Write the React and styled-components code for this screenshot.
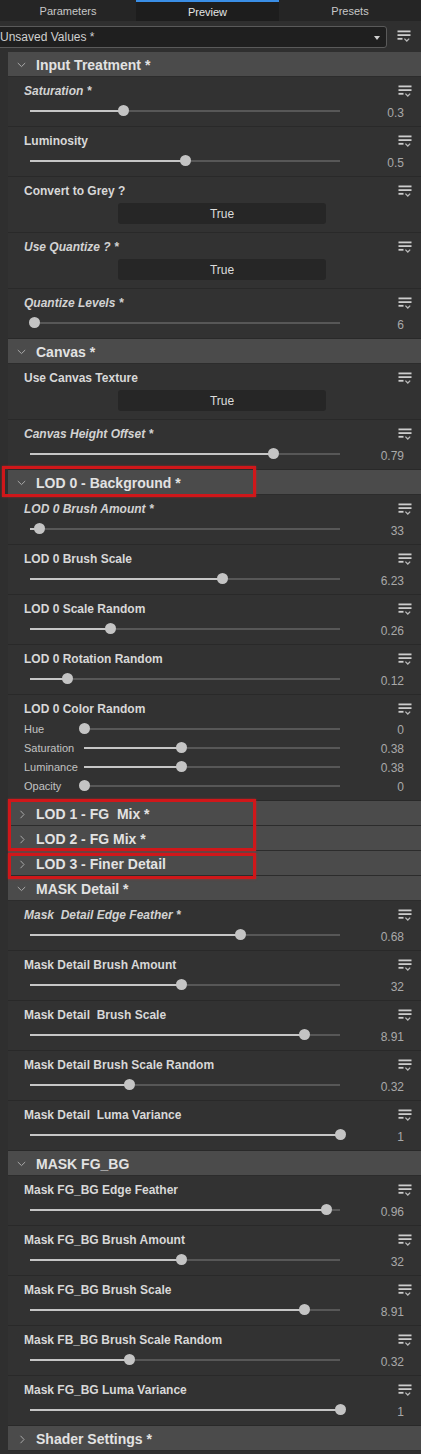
import React from 'react';
import styled, { createGlobalStyle } from 'styled-components';

const Global = createGlobalStyle`
  html, body { margin: 0; padding: 0; background: #2f2f2f; }
  body { font-family: "Liberation Sans", Arial, sans-serif; color: #d4d4d4; }
  * { box-sizing: border-box; }
`;

const Panel = styled.div`
  width: 421px;
  height: 1454px;
  overflow: hidden;
  background: #2f2f2f;
`;

const TabBar = styled.div`
  display: grid;
  grid-template-columns: 136px 143px 142px;
  height: 21px;
  background: #242424;
`;

const Tab = styled.div`
  display: flex;
  align-items: center;
  justify-content: center;
  font-size: 11px;
  color: ${p => (p.$active ? '#e6e6e6' : '#c8c8c8')};
  background: ${p => (p.$active ? '#1d1d1d' : '#252525')};
  border-top: 2px solid ${p => (p.$active ? '#3a8ee6' : 'transparent')};
  padding-top: ${p => (p.$active ? '1px' : '0')};
  padding-bottom: ${p => (p.$active ? '0' : '2px')};
`;

const PresetRow = styled.div`
  display: flex;
  align-items: center;
  height: 31px;
  padding-right: 10px;
`;

const Dropdown = styled.div`
  flex: none;
  width: 391px;
  margin-left: -4px;
  height: 22px;
  border: 1px solid #5a5a5a;
  border-radius: 3px;
  background: #1f1f1f;
  display: flex;
  align-items: center;
  justify-content: space-between;
  padding: 0 6px 0 3px;
  font-size: 12px;
  color: #cfcfcf;
`;

const Caret = styled.span`
  width: 0;
  height: 0;
  border-left: 3px solid transparent;
  border-right: 3px solid transparent;
  border-top: 4px solid #cfcfcf;
  margin-top: 2px;
`;

const MenuWrap = styled.div`
  margin-left: auto;
  display: flex;
  align-items: center;
`;

const MenuIcon = () => (
  <svg width="14" height="13" viewBox="0 0 14 13">
    <rect x="0.5" y="0.5" width="13" height="1.8" fill="#cdcdcd" />
    <rect x="0.5" y="4.2" width="13" height="1.8" fill="#cdcdcd" />
    <rect x="0.5" y="7.9" width="5" height="1.8" fill="#cdcdcd" />
    <polyline points="7.4,8.6 9.8,11 12.2,8.6" fill="none" stroke="#b8b8b8" strokeWidth="1.3" />
  </svg>
);

const Body = styled.div`
  margin-left: 8px;
`;

const Header = styled.div`
  position: relative;
  height: 25px;
  background: #4b4b4b;
  border-bottom: 1px solid #2c2c2c;
  display: flex;
  align-items: center;
  padding: 2px 0 0 9px;
  font-size: 14px;
  font-weight: bold;
  color: #e2e2e2;
  white-space: pre;
`;

const ChevronBox = styled.span`
  width: 19px;
  display: flex;
  align-items: center;
`;

const Chevron = ({ open }) =>
  open ? (
    <svg width="9" height="6" viewBox="0 0 9 6">
      <polyline points="0.8,1 4.5,4.6 8.2,1" fill="none" stroke="#a9a9a9" strokeWidth="1" />
    </svg>
  ) : (
    <svg width="9" height="9" viewBox="0 0 9 9" style={{ marginLeft: 2 }}>
      <polyline points="1.5,0.8 5,4.5 1.5,8.2" fill="none" stroke="#a9a9a9" strokeWidth="1" />
    </svg>
  );

const Row = styled.div`
  background: #323232;
  border-bottom: 1px solid #292929;
  padding: 6px 9px ${p => p.$pb}px 16px;
`;

const LabelLine = styled.div`
  display: flex;
  justify-content: space-between;
  align-items: center;
  height: 16px;
`;

const Label = styled.span`
  font-size: 12px;
  font-weight: bold;
  font-style: ${p => (p.$italic ? 'italic' : 'normal')};
  color: ${p => (p.$italic ? '#d2d2d2' : '#d8d8d8')};
  white-space: pre;
`;

const SliderLine = styled.div`
  display: flex;
  align-items: center;
  height: ${p => p.$h}px;
  margin-top: ${p => p.$mt}px;
`;

const SubLabel = styled.span`
  width: 60px;
  flex: none;
  font-size: 11px;
  color: #c2c2c2;
`;

const Track = styled.div`
  position: relative;
  flex: none;
  width: ${p => p.$w}px;
  margin-left: ${p => p.$ml}px;
  height: 2px;
  background: #575757;
`;

const Fill = styled.div`
  position: absolute;
  left: 0;
  top: 0;
  height: 2px;
  background: #c6c6c6;
`;

const Thumb = styled.div`
  position: absolute;
  top: -5px;
  width: 11px;
  height: 11px;
  margin-left: -5.5px;
  border-radius: 50%;
  background: #c4c4c4;
`;

const Value = styled.span`
  flex: 1;
  text-align: right;
  padding-right: 8px;
  padding-top: 3px;
  font-size: 12px;
  color: #a9a9a9;
`;

const ToggleBtn = styled.div`
  margin: 4px 0 0 94px;
  width: 208px;
  height: 21px;
  border-radius: 3px;
  background: #262626;
  display: flex;
  align-items: center;
  justify-content: center;
  font-size: 12px;
  color: #dcdcdc;
`;

const Marked = styled.div`
  position: relative;
`;

const Mark = styled.div`
  position: absolute;
  pointer-events: none;
  border: 3px solid #d0171a;
  box-shadow: 0 0 2px rgba(230, 30, 30, 0.6);
  top: ${p => p.$top}px;
  left: ${p => p.$left}px;
  width: ${p => p.$w}px;
  height: ${p => p.$h}px;
  z-index: 2;
`;

const Slider = ({ f, width, ml }) => (
  <Track $w={width} $ml={ml}>
    <Fill style={{ width: `${f * width}px` }} />
    <Thumb style={{ left: `${f * width}px` }} />
  </Track>
);

const Item = ({ it }) => {
  if (it.type === 'toggle') {
    return (
      <Row $pb={8}>
        <LabelLine>
          <Label $italic={it.italic}>{it.label}</Label>
          <MenuIcon />
        </LabelLine>
        <ToggleBtn>{it.value}</ToggleBtn>
      </Row>
    );
  }
  if (it.type === 'color') {
    return (
      <Row $pb={5}>
        <LabelLine>
          <Label>{it.label}</Label>
          <MenuIcon />
        </LabelLine>
        <div style={{ height: 2 }} />
        {it.subs.map(s => (
          <SliderLine key={s.label} $h={19} $mt={0}>
            <SubLabel>{s.label}</SubLabel>
            <Slider f={s.f} width={256} ml={0} />
            <Value>{s.value}</Value>
          </SliderLine>
        ))}
      </Row>
    );
  }
  return (
    <Row $pb={5}>
      <LabelLine>
        <Label $italic={it.italic}>{it.label}</Label>
        <MenuIcon />
      </LabelLine>
      <SliderLine $h={20} $mt={2}>
        <Slider f={it.f} width={310} ml={6} />
        <Value>{it.value}</Value>
      </SliderLine>
    </Row>
  );
};

const Section = ({ s }) => (
  <>
    <Header>
      <ChevronBox>
        <Chevron open={s.open} />
      </ChevronBox>
      {s.title}
      {s.mark && <Mark $top={-4} $left={-6} $w={254} $h={31} />}
    </Header>
    {s.open && s.items.map((it, i) => <Item key={i} it={it} />)}
  </>
);

const sl = (label, f, value, italic) => ({ type: 'slider', label, f, value, italic });

const sections = {
  input: {
    title: 'Input Treatment *',
    open: true,
    items: [
      sl('Saturation *', 0.3, '0.3', true),
      sl('Luminosity', 0.5, '0.5'),
      { type: 'toggle', label: 'Convert to Grey ?', value: 'True' },
      { type: 'toggle', label: 'Use Quantize ? *', value: 'True', italic: true },
      sl('Quantize Levels *', 0.016, '6', true),
    ],
  },
  canvas: {
    title: 'Canvas *',
    open: true,
    items: [
      { type: 'toggle', label: 'Use Canvas Texture', value: 'True' },
      sl('Canvas Height Offset *', 0.787, '0.79', true),
    ],
  },
  lod0: {
    title: 'LOD 0 - Background *',
    open: true,
    mark: true,
    items: [
      sl('LOD 0 Brush Amount *', 0.032, '33', true),
      sl('LOD 0 Brush Scale', 0.62, '6.23'),
      sl('LOD 0 Scale Random', 0.26, '0.26'),
      sl('LOD 0 Rotation Random', 0.12, '0.12'),
      {
        type: 'color',
        label: 'LOD 0 Color Random',
        subs: [
          { label: 'Hue', f: 0, value: '0' },
          { label: 'Saturation', f: 0.38, value: '0.38' },
          { label: 'Luminance', f: 0.38, value: '0.38' },
          { label: 'Opacity', f: 0, value: '0' },
        ],
      },
    ],
  },
  lod1: { title: 'LOD 1 - FG  Mix *', open: false },
  lod2: { title: 'LOD 2 - FG Mix *', open: false },
  lod3: { title: 'LOD 3 - Finer Detail', open: false },
  mask: {
    title: 'MASK Detail *',
    open: true,
    items: [
      sl('Mask  Detail Edge Feather *', 0.678, '0.68', true),
      sl('Mask Detail Brush Amount', 0.49, '32'),
      sl('Mask Detail  Brush Scale', 0.887, '8.91'),
      sl('Mask Detail Brush Scale Random', 0.32, '0.32'),
      sl('Mask Detail  Luma Variance', 1, '1'),
    ],
  },
  fgbg: {
    title: 'MASK FG_BG',
    open: true,
    items: [
      sl('Mask FG_BG Edge Feather', 0.955, '0.96'),
      sl('Mask FG_BG Brush Amount', 0.49, '32'),
      sl('Mask FG_BG Brush Scale', 0.887, '8.91'),
      sl('Mask FB_BG Brush Scale Random', 0.32, '0.32'),
      sl('Mask FG_BG Luma Variance', 1, '1'),
    ],
  },
  shader: { title: 'Shader Settings *', open: false },
};

export default function App() {
  return (
    <Panel>
      <Global />
      <TabBar>
        <Tab>Parameters</Tab>
        <Tab $active>Preview</Tab>
        <Tab>Presets</Tab>
      </TabBar>
      <PresetRow>
        <Dropdown>
          <span>Unsaved Values *</span>
          <Caret />
        </Dropdown>
        <MenuWrap>
          <MenuIcon />
        </MenuWrap>
      </PresetRow>
      <Body>
        <Section s={sections.input} />
        <Section s={sections.canvas} />
        <Section s={sections.lod0} />
        <Marked>
          <Section s={sections.lod1} />
          <Section s={sections.lod2} />
          <Mark $top={-2} $left={0} $w={248} $h={52} />
        </Marked>
        <Marked>
          <Section s={sections.lod3} />
          <Mark $top={2} $left={0} $w={248} $h={26} />
        </Marked>
        <Section s={sections.mask} />
        <Section s={sections.fgbg} />
        <Section s={sections.shader} />
      </Body>
    </Panel>
  );
}
